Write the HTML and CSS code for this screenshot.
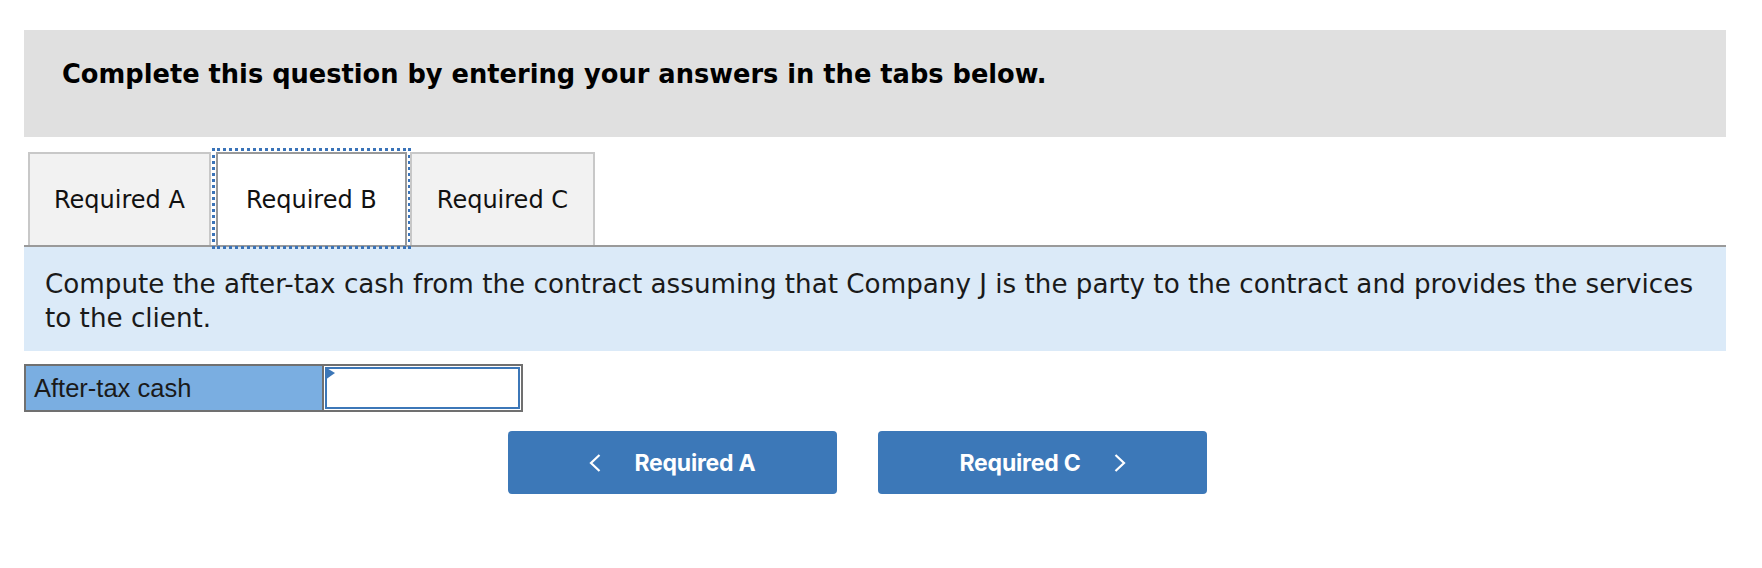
FILE: index.html
```html
<!DOCTYPE html>
<html>
<head>
<meta charset="utf-8">
<link rel="stylesheet" href="styles.css">
</head>
<body>
<div class="page">
  <div class="banner">Complete this question by entering your answers in the tabs below.</div>
  <div class="tabs">
    <div class="tab tab-a">Required A</div>
    <div class="tab active">Required B</div>
    <div class="tab tab-c">Required C</div>
  </div>
  <div class="prompt">Compute the after-tax cash from the contract assuming that Company J is the party to the contract and provides the services to the client.</div>
  <div class="answer-row">
    <div class="answer-label">After-tax cash</div>
    <div class="answer-input"><span class="flag"></span></div>
  </div>
  <div class="nav">
    <button class="nav-btn"><svg class="chev" viewBox="0 0 12 18" width="12" height="18"><path d="M10.5 1 L2 9 L10.5 17" fill="none" stroke="#fff" stroke-width="2.2"/></svg><span>Required A</span></button>
    <button class="nav-btn"><span>Required C</span><svg class="chev" viewBox="0 0 12 18" width="12" height="18"><path d="M1.5 1 L10 9 L1.5 17" fill="none" stroke="#fff" stroke-width="2.2"/></svg></button>
  </div>
</div>
</body>
</html>
```
FILE: styles.css
```css
html, body { margin: 0; padding: 0; background: #fff; }
.page {
  padding: 30px 0 0 24px;
  width: 1702px;
  font-family: "DejaVu Sans", Verdana, sans-serif;
  color: #111;
}
.banner {
  box-sizing: border-box;
  height: 107px;
  background: #e0e0e0;
  padding: 28px 38px 0;
  font-weight: bold;
  font-size: 25.7px;
  line-height: 32px;
  color: #000;
}
.tabs {
  display: flex;
  margin-top: 15px;
  padding-left: 4px;
  border-bottom: 2px solid #9a9a9a;
  height: 93px;
}
.tab {
  box-sizing: border-box;
  display: flex;
  align-items: center;
  height: 93px;
  padding: 0 24px;
  background: #f2f2f2;
  border: 2px solid #c8c8c8;
  border-bottom: none;
  font-size: 24px;
  color: #111;
}
.tab-a { margin-right: 5px; }
.tab-c { padding: 0 25px 0 25px; }
.tab.active {
  background: #fff;
  border-color: #999;
  outline: 3px dotted #3a73b8;
  outline-offset: 1px;
  padding: 0 28px;
  margin-right: 3px;
}
.prompt {
  background: #dbeaf8;
  padding: 20px 21px 16px;
  font-size: 26.2px;
  line-height: 34px;
  color: #1a1a1a;
}
.answer-row {
  display: flex;
  margin-top: 13px;
  width: 499px;
  height: 48px;
  box-sizing: border-box;
  border: 2px solid #707070;
}
.answer-label {
  box-sizing: border-box;
  width: 298px;
  background: #7aaee1;
  border-right: 2px solid #707070;
  font-family: "Liberation Sans", Arial, sans-serif;
  font-size: 25.5px;
  color: #1a1a1a;
  display: flex;
  align-items: center;
  padding-left: 8px;
}
.answer-input {
  flex: 1;
  position: relative;
  background: #fff;
  border: 2px solid #3c77b8;
  margin: 1px;
}
.flag {
  position: absolute;
  left: -2px;
  top: -2px;
  width: 0;
  height: 0;
  border-top: 6px solid transparent;
  border-bottom: 7px solid transparent;
  border-left: 10px solid #3c77b8;
}
.nav {
  display: flex;
  gap: 41px;
  margin-top: 19px;
  margin-left: 484px;
}
.nav-btn {
  width: 329px;
  height: 63px;
  background: #3c78b8;
  border: none;
  border-radius: 4px;
  color: #fff;
  font-family: Inter, Roboto, "Liberation Sans", sans-serif;
  font-weight: bold;
  font-size: 23px;
  letter-spacing: -0.2px;
  display: flex;
  align-items: center;
  justify-content: center;
  gap: 33px;
  padding: 0;
}
.chev { display: block; }
```
